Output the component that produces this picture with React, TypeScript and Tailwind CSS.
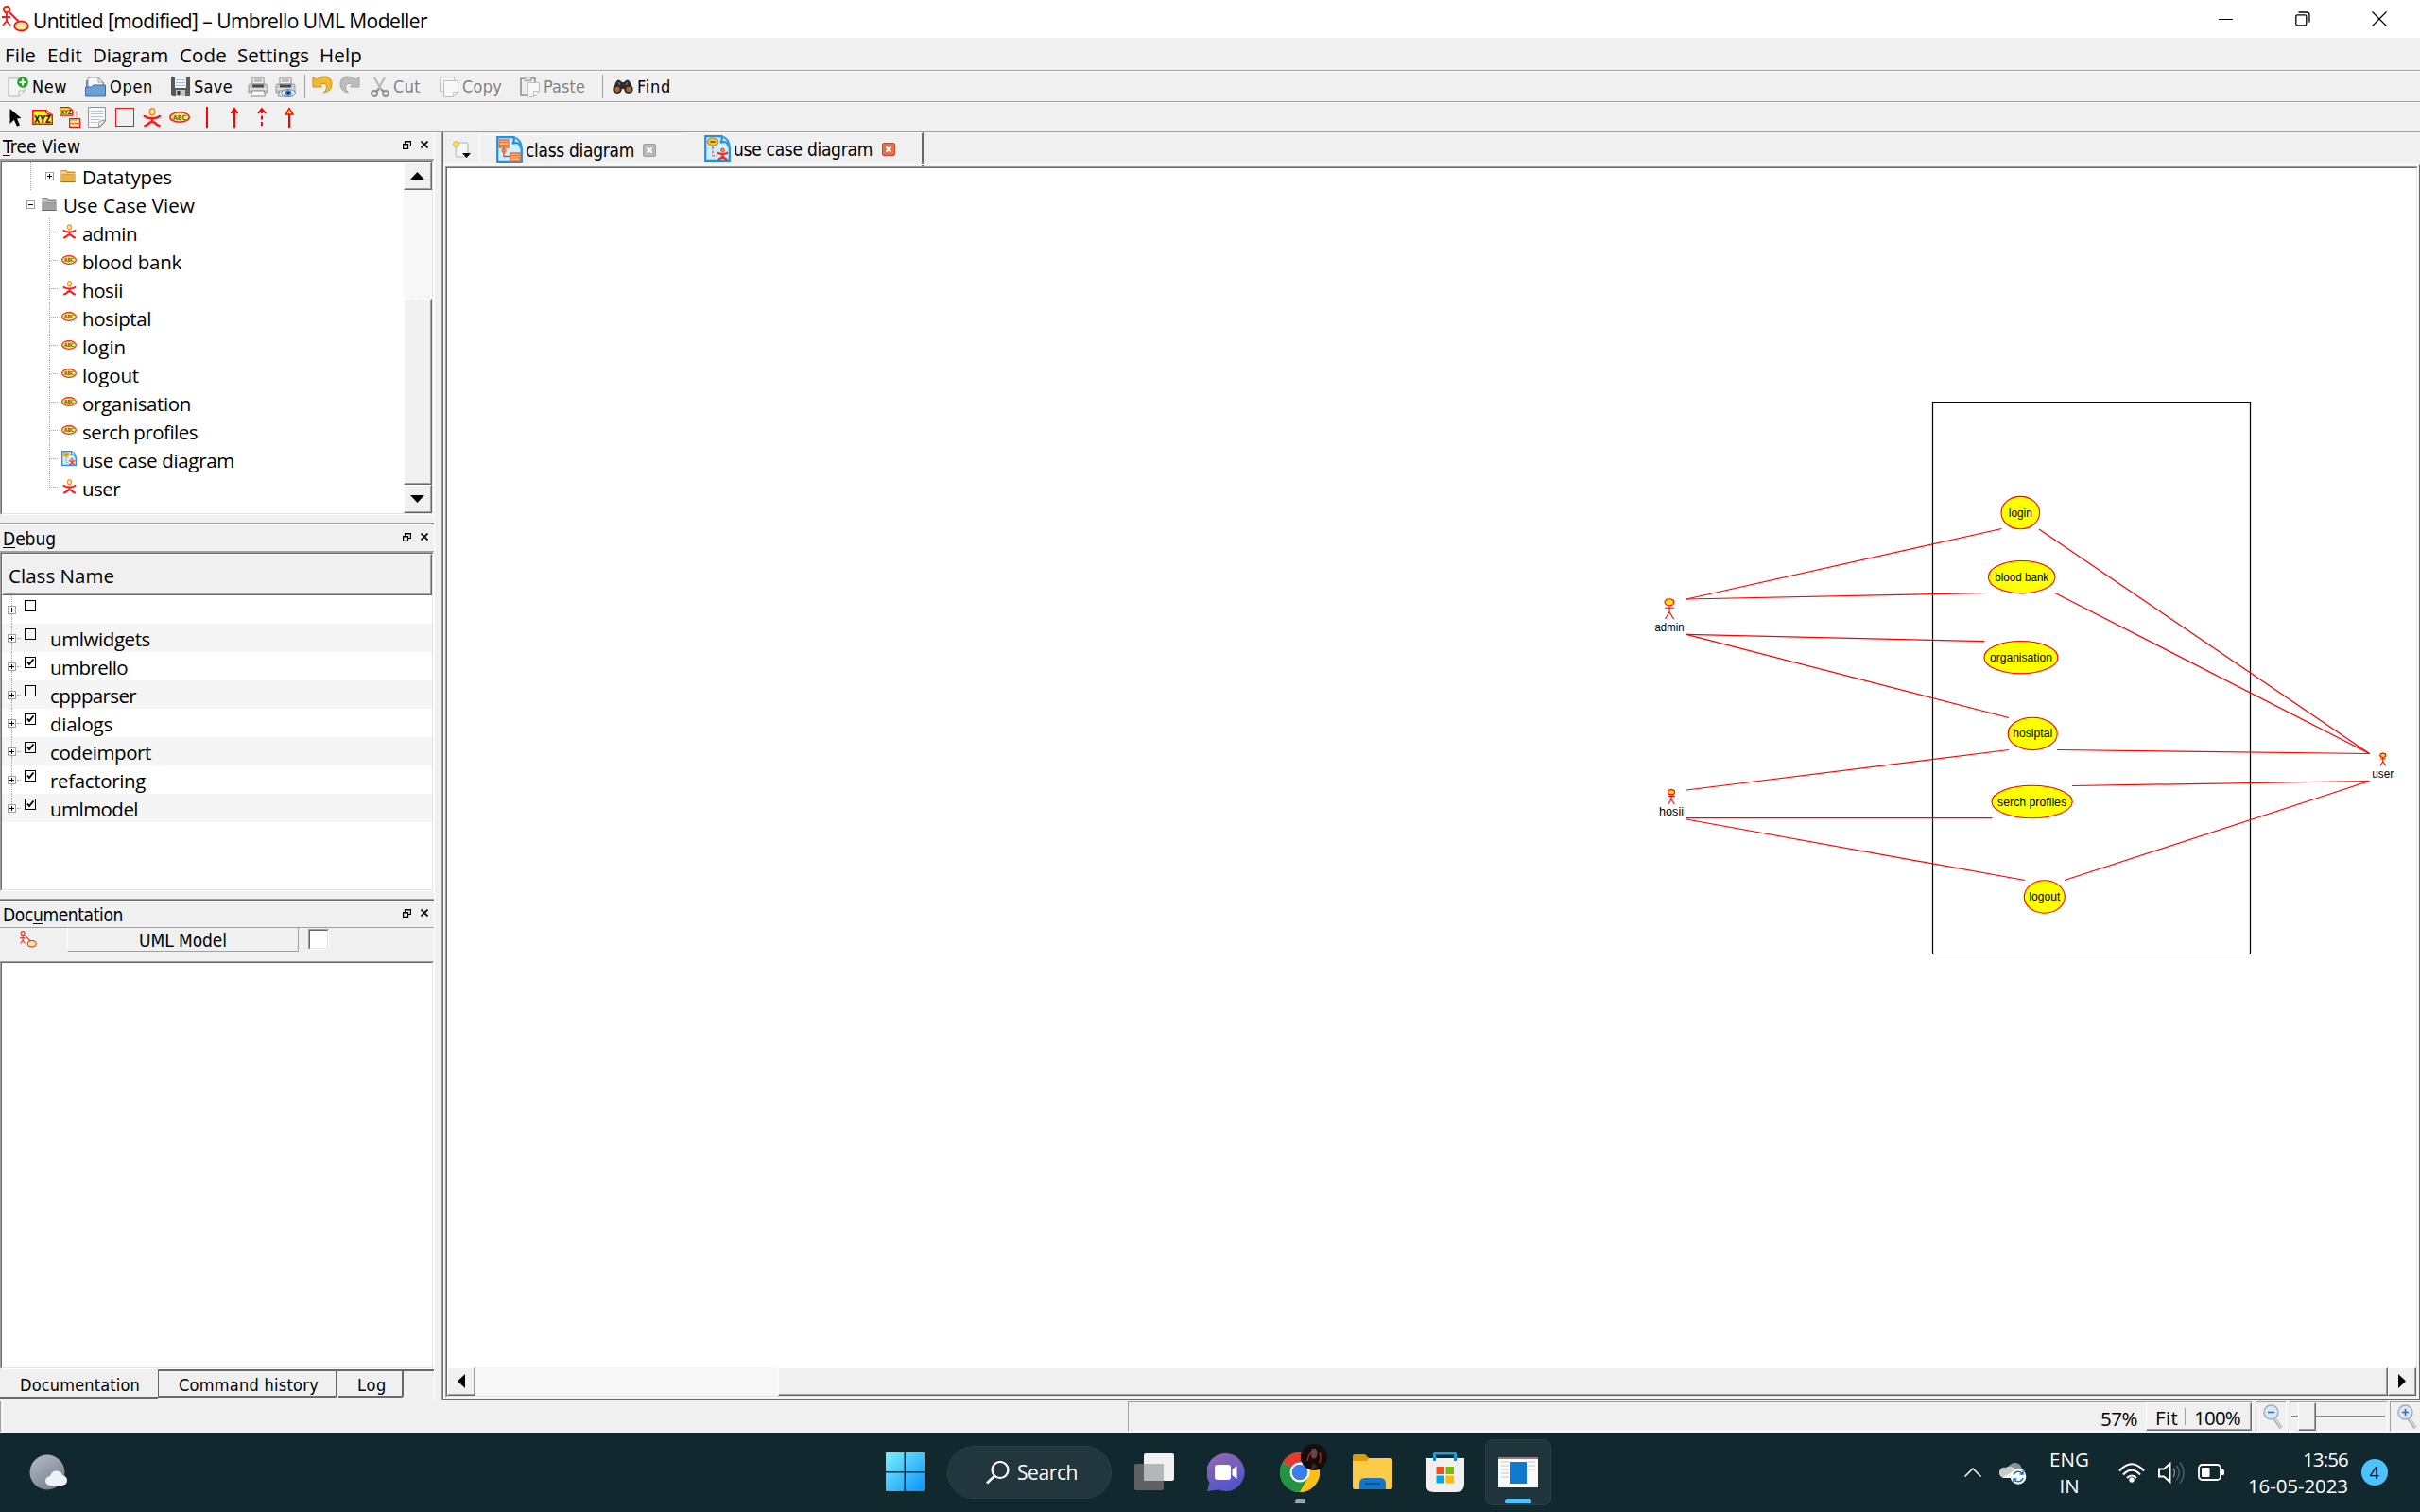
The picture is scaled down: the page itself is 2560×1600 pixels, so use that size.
import { useLayoutEffect, useRef, type ReactNode } from "react";

/* Caption whose tracking is adjusted so that it takes exactly `w` pixels. */
function Label({ w, className = "", children }: { w: number; className?: string; children: ReactNode }) {
  const ref = useRef<HTMLSpanElement>(null);
  useLayoutEffect(() => {
    const el = ref.current;
    if (!el) return;
    el.style.letterSpacing = "0px";
    const n = (el.textContent || "").length;
    const natural = el.getBoundingClientRect().width;
    if (n > 0) el.style.letterSpacing = `${(w - natural) / n}px`;
  }, [w]);
  return (
    <span ref={ref} className={`inline-block shrink-0 whitespace-pre ${className}`}>
      {children}
    </span>
  );
}

const SEGOE = "font-['Open_Sans','Noto_Sans',sans-serif]";
const TAHOMA = "font-['DejaVu_Sans_Condensed','Noto_Sans',sans-serif]";

function Icon({ w, h, vb, className = "", children }: { w: number; h: number; vb?: string; className?: string; children: ReactNode }) {
  return (
    <svg width={w} height={h} viewBox={vb ?? `0 0 ${w} ${h}`} preserveAspectRatio="none" fill="none" className={`block shrink-0 ${className}`}>
      {children}
    </svg>
  );
}

/* ---------- small drawings ---------- */

const Logo = ({ w, h, sw = 1.8 }: { w: number; h: number; sw?: number }) => (
  <Icon w={w} h={h} vb="0 0 29 28">
    <g stroke="#f01818" strokeWidth={sw}>
      <path d="M8 7l12 12M5 8v9M0 12h9M5 16l-4 5M5 16l4 5" />
      <circle cx="5" cy="4" r="3.2" fill="#ffef9e" />
      <ellipse cx="20.500" cy="21.500" rx="7.300" ry="5" fill="#ffe9a0" />
    </g>
  </Icon>
);

const Actor = ({ w, h }: { w: number; h: number }) => (
  <Icon w={w} h={h} vb="0 0 20 21">
    <path d="M1 8.500q4 2.800 9 2.800t9-2.800M10 10.500v5M1.500 19.500q3.500-1 5-3 1.500-1.500 3.500-1.500t3.500 1.500q1.500 2 5 3" stroke="#f91a1a" strokeWidth="2.700" />
    <ellipse cx="10" cy="4.300" rx="2.800" ry="3.600" fill="#ffe97a" stroke="#f5741e" strokeWidth="1.300" />
  </Icon>
);

const UseCase = ({ w, h }: { w: number; h: number }) => (
  <Icon w={w} h={h} vb="0 0 22 12">
    <ellipse cx="11" cy="6" rx="10.200" ry="5.200" fill="#f9e85c" stroke="#f02020" strokeWidth="1.500" />
    <text x="11" y="8.600" textAnchor="middle" fontSize="7" fontWeight="700" fontFamily="DejaVu Sans" fill="#6e6430" textLength="14" lengthAdjust="spacingAndGlyphs">ABC</text>
  </Icon>
);

const Folder = ({ gray }: { gray?: boolean }) => (
  <Icon w={16} h={15}>
    <path d="M0.500 1h6l1 1.500h8V14h-15z" fill={gray ? "#8b8b8b" : "#c9902c"} />
    <path d="M1 2h5l1 2h8v1H1z" fill={gray ? "#bdbdbd" : "#f3cf85"} />
    <path d="M0.500 5.500h15V14h-15z" fill={gray ? "#a2a2a2" : "#e9b44c"} />
    <path d="M0.500 13.500h15" stroke={gray ? "#6a6a6a" : "#a8741c"} />
  </Icon>
);

const PageFrame = ({ children, s }: { children: ReactNode; s: number }) => (
  <Icon w={s} h={s} vb="0 0 28 28">
    <path d="M1.200 1.200H18.500q1 5-1.500 6.500q7-2 8 2.500l1.800 3.300V26.800H1.200z" fill="#cdeefb" stroke="#1e90e6" strokeWidth="2.200" />
    <path d="M18.500 1.200q8 2 8.300 12.300" fill="none" stroke="#2e9bea" strokeWidth="2" />
    {children}
  </Icon>
);

const ClassDiagramIcon = () => (
  <PageFrame s={28}>
    <path d="M3 4h10v8H3zM15 18h10v8H15z" fill="#f8c07a" stroke="#ee6a3a" strokeWidth="1.300" />
    <path d="M3 6.500h10M3 9.500h10M15 20.500h10M15 23h10" stroke="#f0703a" strokeWidth="1.200" />
    <path d="M8 12v9.500h7" stroke="#e8442c" strokeWidth="1.300" />
    <circle cx="8" cy="15.500" r="2" fill="#f7a23c" stroke="#e8442c" />
  </PageFrame>
);

const UseCaseDiagramIcon = ({ s }: { s: number }) => (
  <PageFrame s={s}>
    <ellipse cx="9" cy="7" rx="5.800" ry="4" fill="#f2c62c" stroke="#d98224" strokeWidth="1.200" />
    <path d="M6.500 7h5" stroke="#7d6a1c" strokeWidth="2" />
    <path d="M9 12v10h4" stroke="#ee3a3a" strokeWidth="1.200" strokeDasharray="3 1.500" />
    <path d="M14 18.500q5.500 3 11 0M14.500 26q4-1.500 5-4 1 2.500 5 4M19.500 19v4" stroke="#f52a2a" strokeWidth="2.200" />
    <circle cx="19.500" cy="16" r="1.800" fill="#ff9a3c" stroke="#f52a2a" />
  </PageFrame>
);

const Sep = () => <div className="h-[25px] w-px shrink-0 bg-[#a0a0a0]" />;

const Printer = ({ preview }: { preview?: boolean }) => (
  <Icon w={22} h={22}>
    <path d="M5 1h12v7H5z" fill="#f4f4f4" stroke="#8a8a8a" />
    <path d="M7 3h8M7 5h8" stroke="#888" />
    <path d="M1 9.500q0-1.500 2-1.500h16q2 0 2 1.500V17H1z" fill="#c9c9c9" stroke="#9a9a9a" />
    <path d="M5 8.500h12v3H5z" fill="#4a4a4a" />
    <path d="M2 13h18" stroke="#f2f2f2" />
    <path d="M4.500 15h13l1 6h-15z" fill="#fafafa" stroke="#8a8a8a" />
    {preview && (
      <g>
        <ellipse cx="14" cy="17.500" rx="7.500" ry="4" fill="#dfe9f4" stroke="#6f8aa8" />
        <circle cx="14" cy="17.500" r="3.300" fill="#3b78bd" />
        <circle cx="14" cy="17.500" r="1.400" fill="#0b1c33" />
      </g>
    )}
  </Icon>
);

const Undo = ({ redo }: { redo?: boolean }) => (
  <Icon w={22} h={19} className={redo ? "-scale-x-100" : ""}>
    <path
      d="M1 1.500l3.500 2.500Q9 0.500 14.500 1q6.500 1.200 6.500 8 0 7.500-8.500 9 3.500-3 3-6.500-1-4-5.500-3l-1.500 1 2 2.500H1z"
      fill={redo ? "#bdbdbd" : "#eebb2e"}
      stroke={redo ? "#a4a4a4" : "#c79214"}
    />
  </Icon>
);

const CloseBox = ({ active }: { active?: boolean }) => (
  <Icon w={14} h={14}>
    <rect x="0.500" y="0.500" width="13" height="13" rx="1.500" fill={active ? "#e2714f" : "#b9b9b9"} stroke={active ? "#d1452a" : "#9d9d9d"} />
    <path d="M4.500 4.500l5 5M9.500 4.500l-5 5" stroke="#fff" strokeWidth="2" />
  </Icon>
);

const Magnifier = ({ plus }: { plus?: boolean }) => (
  <Icon w={22} h={28}>
    <path d="M12 15l7 10" stroke="#a9a9a9" strokeWidth="3.600" />
    <path d="M12.500 15l6.500 9.500" stroke="#dedede" strokeWidth="1.400" />
    <circle cx="8.500" cy="8.500" r="7.500" fill="#d9e8f8" stroke="#a3acb8" strokeWidth="1.500" />
    <path d={plus ? "M5 8.500h7M8.500 5v7" : "M5 8.500h7"} stroke="#3a69b0" strokeWidth="1.600" />
  </Icon>
);

/* ---------- window chrome ---------- */

function TitleBar() {
  return (
    <div className="flex h-10 shrink-0 items-center bg-white pl-0.5">
      <Logo w={29} h={28} />
      <Label w={417} className={`ml-[4px] text-[21px] leading-10 ${SEGOE} pt-1`}>Untitled [modified] – Umbrello UML Modeller</Label>
      <div className="ml-auto flex items-center pr-[35px]">
        <Icon w={15} h={15}><path d="M0 7.500h15" stroke="#000" /></Icon>
        <Icon w={16} h={16} className="ml-[66px]">
          <rect x="0.800" y="3.800" width="11" height="11" rx="1.500" stroke="#000" strokeWidth="1.300" />
          <path d="M3.500 1h8.500q3 0 3 3v7.500" stroke="#000" strokeWidth="1.300" />
        </Icon>
        <Icon w={16} h={16} className="ml-[65px]"><path d="M0.500 0.500l15 15M15.500 0.500l-15 15" stroke="#000" strokeWidth="1.200" /></Icon>
      </div>
    </div>
  );
}

function MenuBar() {
  const items: [string, number, number][] = [
    ["File", 33, 5], ["Edit", 37, 12], ["Diagram", 80, 11], ["Code", 50, 12], ["Settings", 76, 11], ["Help", 45, 11],
  ];
  return (
    <div className={`flex h-9 shrink-0 border-b border-white ${SEGOE} text-[20.500px]`}>
      <div className="flex flex-1 border-b border-[#a0a0a0]">
        {items.map(([t, w, m]) => (
          <div key={t} style={{ marginLeft: m }} className="leading-[37px]">
            <Label w={w}>{t}</Label>
          </div>
        ))}
      </div>
    </div>
  );
}

function Tool({ label, w, x, gap, disabled, children }: { label?: string; w: number; x: number; gap?: number; disabled?: boolean; children: ReactNode }) {
  return (
    <div className="flex shrink-0 items-center" style={{ width: x }}>
      {children}
      {label && (
        <div style={{ marginLeft: gap }} className="pt-px leading-8">
          <Label w={w} className={disabled ? "text-[#808080] [text-shadow:1px_1px_0_#fff]" : ""}>{label}</Label>
        </div>
      )}
    </div>
  );
}

function MainToolbar() {
  return (
    <div className="h-[33px] shrink-0 border-b border-white">
      <div className={`flex h-8 items-center border-b border-[#a0a0a0] pl-2 text-[18px] ${TAHOMA}`}>
        <Tool label="New" w={37} x={82} gap={4}>
          <Icon w={22} h={22}>
            <path d="M1 2h17v13l-6 6H1z" fill="#f5f5f5" stroke="#b5b5b5" />
            <path d="M18 15h-6v6z" fill="#fff" stroke="#b5b5b5" />
            <circle cx="16" cy="6" r="5.800" fill="#1ea51e" />
            <path d="M16 2.500v7M12.500 6h7" stroke="#fff" strokeWidth="2.200" />
          </Icon>
        </Tool>
        <Tool label="Open" w={46} x={91} gap={4}>
          <Icon w={22} h={22}>
            <path d="M1 4h5l1 2h13v8H1z" fill="#5b87bd" />
            <path d="M3 1h11l5 5v8H3z" fill="#f6f6f6" stroke="#999" />
            <path d="M14 1v5h5" stroke="#999" />
            <path d="M0.500 11h6l2-2h13v12h-21z" fill="#6d9fd8" stroke="#3f6ca6" />
          </Icon>
        </Tool>
        <Tool label="Save" w={41} x={81} gap={4}>
          <Icon w={20} h={21}>
            <path d="M0 0h20v21H1.500L0 19.500z" fill="#55585c" />
            <path d="M4 1h12v11H4z" fill="#f2f6fa" />
            <path d="M5 3.500h10M5 6.500h10M5 9.500h10" stroke="#a7bdd6" />
            <path d="M5 14h10v7H5z" fill="#c6c6c6" />
            <path d="M6.500 15h3v5h-3z" fill="#333" />
          </Icon>
        </Tool>
        <Tool w={0} x={29}><Printer /></Tool>
        <Tool w={0} x={31}><Printer preview /></Tool>
        <Sep />
        <div className="w-[7px]" />
        <Tool w={0} x={29}><div className="-mt-1"><Undo /></div></Tool>
        <Tool w={0} x={33}><div className="-mt-1"><Undo redo /></div></Tool>
        <Tool label="Cut" w={29} x={73} gap={4} disabled>
          <Icon w={20} h={22}>
            <path d="M4 1l8 14M15 1L7 15" stroke="#b4b4b4" strokeWidth="2" />
            <circle cx="4" cy="18" r="3" stroke="#8f8f8f" strokeWidth="1.800" />
            <circle cx="16" cy="18" r="3" stroke="#8f8f8f" strokeWidth="1.800" />
            <path d="M6 16l3-3M14 16l-3-3" stroke="#8f8f8f" strokeWidth="2" />
          </Icon>
        </Tool>
        <Tool label="Copy" w={42} x={85} gap={4} disabled>
          <Icon w={20} h={22}>
            <path d="M0.500 0.500h15v15h-15z" fill="#f4f4f4" stroke="#c6c6c6" />
            <path d="M4.500 4.500h15v12l-5 5h-10z" fill="#f8f8f8" stroke="#c0c0c0" />
            <path d="M19.500 16.500h-5v5" stroke="#c0c0c0" />
          </Icon>
        </Tool>
        <Tool label="Paste" w={44} x={87} gap={4} disabled>
          <Icon w={21} h={22}>
            <path d="M1 2h15v18H1z" fill="#ececec" stroke="#8f8f8f" strokeWidth="1.600" />
            <path d="M5 0.500h7v4H5z" fill="#d8d8d8" stroke="#a0a0a0" />
            <path d="M8.500 6.500h12v9l-6 6h-6z" fill="#f8f8f8" stroke="#c0c0c0" />
            <path d="M20.500 15.500h-6v6" stroke="#c0c0c0" />
          </Icon>
        </Tool>
        <Sep />
        <div className="w-[10px]" />
        <Tool label="Find" w={36} x={80} gap={4}>
          <Icon w={22} h={17}>
            <path d="M4 3q2-3 5 0l1 1h2l1-1q3-3 5 0l3.500 7q1 5-4 6-5 0-5.500-5h-2q-.5 5-5.500 5-5-1-4-6z" fill="#2c2c2c" />
            <circle cx="5" cy="11.500" r="2.700" fill="#b4622a" />
            <circle cx="17" cy="11.500" r="2.700" fill="#b4622a" />
            <path d="M6 4l2 3M16 4l-2 3" stroke="#999" />
          </Icon>
        </Tool>
      </div>
    </div>
  );
}

function DiagramToolbar() {
  return (
    <div className="h-[31px] shrink-0 border-b border-[#a0a0a0] pl-[10px]">
      <div className="flex h-[30px] items-center">
        <Icon w={24} h={20}><path d="M0.500 1l12 10-4.500.500 3 7-3 1.300-3.200-7L0.500 17z" fill="#000" /></Icon>
        <Icon w={29} h={22}>
          <path d="M0.800 3.800h14l6.500 5v9.500H0.800z" fill="#ffee22" stroke="#f01010" strokeWidth="1.400" />
          <path d="M14.500 3.800q0 4.500 6.500 5" fill="#fffbb0" stroke="#f01010" strokeWidth="1.400" />
          <text x="11" y="17" textAnchor="middle" fontSize="10.500" fontWeight="700" fontFamily="DejaVu Sans" fill="#222" textLength="18" lengthAdjust="spacingAndGlyphs">XYZ</text>
        </Icon>
        <Icon w={30} h={22}>
          <path d="M0.600 0.600h9l4 3v5.500h-13z" fill="#ffee22" stroke="#f01010" strokeWidth="1.200" />
          <text x="7" y="8" textAnchor="middle" fontSize="6.500" fontWeight="700" fontFamily="DejaVu Sans" fill="#333" textLength="11" lengthAdjust="spacingAndGlyphs">XYZ</text>
          <path d="M14 5.500h4v6" stroke="#f01010" strokeDasharray="1.500 1.500" />
          <path d="M10.600 12.600h11v8.800h-11z" fill="#ffe9a0" stroke="#f01010" strokeWidth="1.200" />
          <path d="M10.600 14h11M10.600 17.500h11" stroke="#f46a2a" strokeWidth="1.200" />
        </Icon>
        <Icon w={29} h={22}>
          <path d="M0.500 0.500h18v15l-6 6h-12z" fill="#f7f8f9" stroke="#8d9399" />
          <path d="M2.500 4.500h14M2.500 7.500h14M2.500 10.500h14M2.500 13.500h11M2.500 16.500h8" stroke="#bcc3ca" />
          <path d="M18.500 14l-7 7.500.5-6z" fill="#fff" stroke="#8d9399" />
        </Icon>
        <Icon w={29} h={20}><rect x="0.500" y="0.500" width="19" height="19" stroke="#f01414" /></Icon>
        <Actor w={20} h={21} />
        <div className="ml-2"><UseCase w={22} h={12} /></div>
        <Icon w={110} h={22} className="ml-[17px]">
          <path d="M1 0v22M30 3v19" stroke="#f00" strokeWidth="2" />
          <path d="M26.500 7l3.500-5 3.500 5" stroke="#f00" strokeWidth="2" />
          <path d="M59 3v19" stroke="#f00" strokeWidth="2" strokeDasharray="4 2.500" />
          <path d="M55 7l4-5 4 5" stroke="#f00" strokeWidth="2" />
          <path d="M88 8v14" stroke="#f00" strokeWidth="2" />
          <path d="M84 8l4-6.500 4 6.500z" fill="#ffe23a" stroke="#f00" strokeWidth="1.400" />
        </Icon>
      </div>
    </div>
  );
}

/* ---------- docks ---------- */

function DockTitle({ w, children }: { w: number; children: ReactNode }) {
  return (
    <div className={`flex h-[27px] shrink-0 items-center pl-[3px] pr-[6px] text-[19px] leading-[27px] ${TAHOMA}`}>
      <Label w={w} className="pt-0.5 underline-offset-2">{children}</Label>
      <Icon w={9} h={9} className="ml-auto -mt-[3px]">
        <path d="M2.500 3V0.500h6v5H6M2.500 1h6" stroke="#000" strokeWidth="1.200" />
        <path d="M0.600 3.600h5v4.800h-5zM0.600 4h5" stroke="#000" strokeWidth="1.200" />
      </Icon>
      <Icon w={8} h={8} className="ml-[10px] -mt-[3px]"><path d="M0.500 0.500l7 7M7.500 0.500l-7 7" stroke="#000" strokeWidth="1.700" /></Icon>
    </div>
  );
}

const PlusMinus = ({ minus }: { minus?: boolean }) => (
  <Icon w={9} h={9}>
    <rect x="0.500" y="0.500" width="8" height="8" fill="#fff" stroke="#a0a0a0" />
    <path d={minus ? "M2 4.500h5" : "M2 4.500h5M4.500 2v5"} stroke="#000" />
  </Icon>
);

const RAISED = "border border-t-[#fff] border-l-[#fff] border-r-[#696969] border-b-[#696969] bg-[#f0f0f0] shadow-[inset_-1px_-1px_0_#a0a0a0]";
const SUNKEN = "border border-t-[#a0a0a0] border-l-[#a0a0a0] border-r-white border-b-white";
const SUNKEN_IN = "border border-t-[#696969] border-l-[#696969] border-r-[#e3e3e3] border-b-[#e3e3e3]";
const DITHER = "bg-[repeating-conic-gradient(#fff_0_25%,#f0f0f0_0_50%)] bg-[length:2px_2px]";

type TreeItem = { label: string; w: number; kind: "actor" | "usecase" | "diagram" };
const TREE: TreeItem[] = [
  { label: "admin", w: 58, kind: "actor" },
  { label: "blood bank", w: 105, kind: "usecase" },
  { label: "hosii", w: 43, kind: "actor" },
  { label: "hosiptal", w: 73, kind: "usecase" },
  { label: "login", w: 46, kind: "usecase" },
  { label: "logout", w: 60, kind: "usecase" },
  { label: "organisation", w: 115, kind: "usecase" },
  { label: "serch profiles", w: 122, kind: "usecase" },
  { label: "use case diagram", w: 161, kind: "diagram" },
  { label: "user", w: 40, kind: "actor" },
];

function TreeDock() {
  return (
    <div className="flex h-[413px] shrink-0 flex-col border-t border-white">
      <DockTitle w={82}><span className="underline">T</span>ree View</DockTitle>
      <div className="h-px shrink-0 bg-[#a0a0a0]" />
      <div className={`flex h-[376px] flex-col ${SUNKEN}`}>
        <div className={`flex flex-1 bg-white ${SUNKEN_IN}`}>
          <div className={`flex-1 text-[20.500px] leading-[31px] ${SEGOE}`}>
            <div className="flex h-[30px] items-center">
              <div className="h-full w-[31px] shrink-0 border-r border-dotted border-[#a0a0a0]" />
              <div className="flex w-[31px] items-center pl-[15px]"><PlusMinus /></div>
              <Folder />
              <div className="ml-[7px] pt-0.5"><Label w={95}>Datatypes</Label></div>
            </div>
            <div className="flex h-[30px] items-center">
              <div className="flex w-[42px] items-center pl-[26px]"><PlusMinus minus /></div>
              <Folder gray />
              <div className="ml-[7px] pt-0.5"><Label w={139}>Use Case View</Label></div>
            </div>
            {TREE.map((t, i) => (
              <div key={t.label} className="flex h-[30px] items-center">
                <div className="flex h-full w-[59px] shrink-0 flex-col items-end">
                  <div className="h-[15px] w-[9px] border-b border-l border-dotted border-[#a0a0a0]" />
                  <div className={i < TREE.length - 1 ? "h-[15px] w-[9px] border-l border-dotted border-[#a0a0a0]" : "h-[15px]"} />
                </div>
                <div className="-mt-0.5 ml-[4px] flex w-4 justify-center">
                  {t.kind === "actor" && <Actor w={15} h={16} />}
                  {t.kind === "usecase" && <UseCase w={16} h={10} />}
                  {t.kind === "diagram" && <UseCaseDiagramIcon s={16} />}
                </div>
                <div className="ml-[6px] pt-0.5"><Label w={t.w}>{t.label}</Label></div>
              </div>
            ))}
          </div>
          <div className={`flex w-[30px] flex-col ${DITHER}`}>
            <div className={`flex h-[30px] items-center justify-center pr-px ${RAISED}`}>
              <Icon w={15} h={8}><path d="M0 8l7.500-8L15 8z" fill="#000" /></Icon>
            </div>
            <div className={`mt-[115px] flex-1 ${RAISED}`} />
            <div className={`flex h-[30px] items-center justify-center pr-px ${RAISED}`}>
              <Icon w={15} h={8}><path d="M0 0l7.500 8L15 0z" fill="#000" /></Icon>
            </div>
          </div>
        </div>
      </div>
    </div>
  );
}

const Splitter = () => <div className="h-[2px] shrink-0 border-b border-[#696969] bg-[#a0a0a0]" />;

const CLASSES: [string, number, boolean][] = [
  ["", 0, false], ["umlwidgets", 106, false], ["umbrello", 82, true], ["cppparser", 91, false],
  ["dialogs", 66, true], ["codeimport", 107, true], ["refactoring", 101, true], ["umlmodel", 93, true],
];

function DebugDock() {
  return (
    <div className="flex h-[396px] shrink-0 flex-col border-t border-white">
      <DockTitle w={56}><span className="underline">D</span>ebug</DockTitle>
      <div className="h-px shrink-0 bg-[#a0a0a0]" />
      <div className={`flex h-[359px] flex-col ${SUNKEN}`}>
        <div className={`flex flex-1 flex-col bg-white ${SUNKEN_IN}`}>
          <div className={`h-[44px] shrink-0 pl-[6px] text-[20.500px] leading-[45px] ${SEGOE} ${RAISED}`}><Label w={112}>Class Name</Label></div>
          <div className={`text-[20.500px] ${SEGOE}`}>
            {CLASSES.map(([t, w, on], i) => (
              <div key={i} className={`flex h-[30px] ${i % 2 ? "bg-[#f5f5f5]" : ""}`}>
                <div className="flex w-[24px] shrink-0 flex-col pl-[6px]">
                  <div className="ml-1 h-[11px] border-l border-dotted border-[#a0a0a0]" />
                  <div className="flex items-center"><PlusMinus /><div className="ml-px w-[4px] border-t border-dotted border-[#a0a0a0]" /></div>
                  <div className={i < 7 ? "ml-1 h-[10px] border-l border-dotted border-[#a0a0a0]" : ""} />
                </div>
                <div className="mt-[5px] h-3 w-3 border border-black">
                  {on && <Icon w={10} h={10}><path d="M2 4.500l2 2.500 4.500-5.500" stroke="#000" strokeWidth="1.900" /></Icon>}
                </div>
                {t && <div className="ml-[15px] leading-[32px]"><Label w={w}>{t}</Label></div>}
              </div>
            ))}
          </div>
        </div>
      </div>
    </div>
  );
}

function DocumentationDock() {
  return (
    <div className="flex min-h-0 flex-1 flex-col">
      <div className="shrink-0 border-b border-[#a0a0a0] border-t border-t-white"><DockTitle w={127}>Doc<span className="underline">u</span>mentation</DockTitle></div>
      <div className="flex h-[35px] shrink-0 items-start">
        <div className="mt-[3px] ml-[21px]"><Logo w={18} h={18} sw={1.6} /></div>
        <div className={`ml-[32px] flex h-[25px] w-[245px] justify-center border border-t-0 border-l-white border-r-[#a0a0a0] border-b-[#a0a0a0] text-[19px] leading-[27px] ${TAHOMA}`}>
          <Label w={93}>UML Model</Label>
        </div>
        <div className={`mt-px ml-[10px] h-[22px] w-[22px] bg-white ${SUNKEN}`}><div className={`h-full ${SUNKEN_IN}`} /></div>
      </div>
      <div className={`flex flex-1 flex-col ${SUNKEN}`}><div className={`flex-1 bg-white ${SUNKEN_IN}`} /></div>
      <div className={`flex h-[32px] shrink-0 text-[18px] ${TAHOMA}`}>
        <div className="flex h-[31px] w-[167px] border-b-2 border-[#696969] pl-[21px] leading-[34px]"><Label w={127}>Documentation</Label></div>
        <div className="flex flex-1 items-start border-t-2 border-[#696969]">
          <div className="flex h-[28px] w-[190px] rounded-br-[3px] border-r-2 border-b-2 border-l border-[#696969] pl-[21px] leading-[29px]"><Label w={148}>Command history</Label></div>
          <div className="ml-px flex h-[28px] w-[69px] rounded-br-[3px] border-r-2 border-b-2 border-[#696969] pl-[20px] leading-[29px]"><Label w={31}>Log</Label></div>
        </div>
      </div>
    </div>
  );
}

/* ---------- diagram ---------- */

const USE_CASES: [string, number, number, number, number][] = [
  ["login", 2137.300, 542.600, 20.300, 25],
  ["blood bank", 2138.700, 610.700, 35.300, 57],
  ["organisation", 2137.900, 695.700, 39, 66],
  ["hosiptal", 2150.200, 776.400, 26, 42],
  ["serch profiles", 2149.600, 848.500, 42.600, 73],
  ["logout", 2162.800, 949, 21.500, 33],
];
const LINKS = [
  "M1784 634L2117.500 559.500", "M1784 634L2104 627.500", "M1784 671.300L2099 678.700", "M1784 671.300L2125 759.500",
  "M2157 560L2506.500 797.500", "M2174 627.500L2506.500 797.500", "M2176 793.500L2506.500 797.500", "M2192 831.500L2506.500 826.500",
  "M2184 931.500L2506.500 826.500", "M1784 836L2125 793.500", "M1784 865.500H2107.500", "M1784 867L2142 931.500",
];
const ACTORS: { name: string; x: number; y: number; s: number; ly: number; w: number }[] = [
  { name: "admin", x: 1766, y: 633.500, s: 1, ly: 667.500, w: 31 },
  { name: "hosii", x: 1768, y: 835.500, s: 0.720, ly: 862.500, w: 26 },
  { name: "user", x: 2520.800, y: 797, s: 0.620, ly: 822.500, w: 23 },
];

function Diagram() {
  return (
    <svg width={2083} height={1269} viewBox="473 178 2083 1269" className="block shrink-0" fontFamily="Liberation Sans" fontSize={12} fill="#000" textAnchor="middle">
      <path d="M2044.500 425.500H2380.500V1009.500H2044.500z" fill="none" stroke="#000" strokeWidth="1.200" />
      {LINKS.map((d) => <path key={d} d={d} stroke="#ff0000" strokeWidth="1.250" />)}
      {USE_CASES.map(([t, x, y, rx, w]) => (
        <g key={t}>
          <ellipse cx={x} cy={y} rx={rx} ry={17.200} fill="#ffff00" stroke="#ff0000" strokeWidth="1.100" />
          <text x={x} y={y + 4} textLength={w} lengthAdjust="spacingAndGlyphs">{t}</text>
        </g>
      ))}
      {ACTORS.map((a) => (
        <g key={a.name}>
          <g transform={`translate(${a.x} ${a.y}) scale(${a.s})`} stroke="#ff0000" fill="none" strokeWidth={1.100 / a.s}>
            <path d="M0 7v7M-5 9.700H5M0 14l-4.500 7.500M0 14l4.500 7.500" />
            <ellipse cx="0" cy="3.700" rx="5" ry="3.500" fill="#ffe800" />
          </g>
          <text x={a.x} y={a.ly} textLength={a.w} lengthAdjust="spacingAndGlyphs">{a.name}</text>
        </g>
      ))}
    </svg>
  );
}

function CentralArea() {
  return (
    <div className="flex min-w-0 flex-1 flex-col border-l border-[#a0a0a0]">
      <div className="flex min-h-0 flex-1 flex-col border-l border-b border-[#696969]">
        <div className={`flex h-[34px] shrink-0 pl-[9px] text-[19px] ${TAHOMA}`}>
          <Icon w={29} h={25} className="mt-[8px]">
            <path d="M4.500 5q0-2 2-2h9q1.500 0 1.500 2v11q0 2-2 2h-9q-2 0-2-2z" fill="#f6f6f6" stroke="#b0b0b0" />
            <circle cx="4.500" cy="4.500" r="3" fill="#f5dc5a" stroke="#d9b93c" />
            <path d="M11 14h9l-4.500 5z" fill="#000" />
          </Icon>
          <div className="mt-[2px] flex w-[219px] border-t border-l border-white pl-[17px]">
            <div className="pt-px"><ClassDiagramIcon /></div>
            <Label w={115} className="ml-[3px] leading-[33px]">class diagram</Label>
            <div className="mt-[9px] ml-[9px]"><CloseBox /></div>
          </div>
          <div className="flex h-[36px] w-[251px] border-t border-r-2 border-t-white border-r-[#696969] pl-[19px]">
            <div className="pt-[2px]"><UseCaseDiagramIcon s={28} /></div>
            <Label w={147} className="ml-[3px] leading-[34px]">use case diagram</Label>
            <div className="mt-[10px] ml-[10px]"><CloseBox active /></div>
          </div>
        </div>
        <div className="flex flex-1 flex-col border-t border-l border-r border-t-white border-l-white border-r-[#696969] p-px">
          <div className={`flex flex-1 flex-col ${SUNKEN}`}>
            <div className={`flex flex-1 flex-col bg-white ${SUNKEN_IN}`}>
              <div className="flex flex-1"><Diagram /></div>
              <div className={`flex h-[30px] shrink-0 ${DITHER}`}>
                <div className={`flex w-[30px] items-center justify-center pb-px ${RAISED}`}><Icon w={8} h={15}><path d="M8 0L0 7.500 8 15z" fill="#000" /></Icon></div>
                <div className={`ml-[320px] flex-1 ${RAISED}`} />
                <div className={`flex w-[30px] items-center justify-center pb-px ${RAISED}`}><Icon w={8} h={15}><path d="M0 0l8 7.500L0 15z" fill="#000" /></Icon></div>
              </div>
            </div>
          </div>
        </div>
      </div>
    </div>
  );
}

function StatusBar() {
  return (
    <div className={`flex h-[35px] shrink-0 items-start pt-[2px] text-[20.500px] leading-[35px] ${SEGOE}`}>
      <div className="h-[32px] w-[3px] border-x border-l-[#a0a0a0] border-r-white" />
      <div className={`ml-[1190px] flex h-[32px] w-[1190px] justify-end ${SUNKEN}`}>
        <Label w={39} className="mr-[9px]">57%</Label>
        <div className={`flex h-[30px] w-[112px] items-center pl-[9px] ${RAISED}`}>
          <Label w={24} className="pt-0.5">Fit</Label>
          <div className="ml-[7px] h-[18px] w-px bg-[#a0a0a0]" />
          <Label w={49} className="ml-[9px] pt-0.5">100%</Label>
        </div>
      </div>
      <div className={`ml-[3px] flex h-[32px] w-[33px] pt-0.5 pl-[7px] ${SUNKEN}`}><Magnifier /></div>
      <div className={`ml-[3px] flex h-[32px] w-[104px] items-center pl-px ${SUNKEN}`}>
        <div className="h-[3px] w-[7px] border-t-2 border-b border-t-[#8a8a8a] border-b-white" />
        <div className={`h-[30px] w-[19px] ${RAISED}`} />
        <div className="h-[3px] w-[73px] border-t-2 border-b border-t-[#8a8a8a] border-b-white" />
      </div>
      <div className={`ml-[2px] flex h-[32px] flex-1 overflow-hidden border-r-0 pt-0.5 pl-[7px] ${SUNKEN}`}><Magnifier plus /></div>
    </div>
  );
}

/* ---------- taskbar ---------- */

function Taskbar() {
  return (
    <div className={`flex h-[84px] shrink-0 items-center bg-[#12282f] text-white ${SEGOE}`}>
      <Icon w={42} h={38} className="ml-[31px]">
        <defs>
          <linearGradient id="moon" x1="0" y1="0" x2="0.600" y2="1"><stop stopColor="#b4bcc8" /><stop offset="1" stopColor="#7b838d" /></linearGradient>
        </defs>
        <circle cx="19" cy="19" r="18.500" fill="url(#moon)" />
        <path d="M22 33q-5-1-5-5t5-5q2-6 7-5.500 5 0 6 4.500 5 1 5 5.500t-5 5.500z" fill="#eef1f5" />
      </Icon>
      <Icon w={42} h={42} className="ml-[864px]">
        <defs>
          <linearGradient id="win" x1="0" y1="0" x2="1" y2="1" gradientUnits="objectBoundingBox"><stop stopColor="#7defff" /><stop offset="1" stopColor="#0a93fb" /></linearGradient>
        </defs>
        <path d="M0 1q0-1 1-1h18.500v20H0zM21 0h19q1 0 1 1v19H21zM0 21.500h19.500V41H1q-1 0-1-1zM21 21.500h20V40q0 1-1 1H21z" fill="url(#win)" />
      </Icon>
      <div className="ml-[23px] flex h-14 w-[174px] items-center rounded-full border border-[#2b3f46] bg-[#21363d]">
        <Icon w={25} h={25} className="ml-[40px]">
          <circle cx="15" cy="9.500" r="8.500" stroke="#fff" strokeWidth="2.200" />
          <path d="M9 16l-8 7.500" stroke="#fff" strokeWidth="2.500" />
        </Icon>
        <div className="ml-[8px]"><Label w={64} className="text-[21px] leading-8">Search</Label></div>
      </div>
      <Icon w={43} h={40} className="ml-[24px]">
        <rect x="0" y="11" width="31" height="28" rx="2" fill="#5f6263" />
        <rect x="10" y="0" width="32" height="29" rx="2" fill="#f1f1f1" />
        <path d="M10 11h21v18H12q-2 0-2-2z" fill="#b5b6b7" />
      </Icon>
      <Icon w={41} h={41} className="ml-[34px]">
        <defs><linearGradient id="chat" x1="0" y1="0" x2="0.500" y2="1"><stop stopColor="#9b68b0" /><stop offset="1" stopColor="#5156c8" /></linearGradient></defs>
        <path d="M20 0a20 20 0 1 1-8 38.500L0 40l2.500-9A20 20 0 0 1 20 0z" fill="url(#chat)" />
        <rect x="8" y="12" width="17" height="16" rx="3" fill="#fff" />
        <path d="M26.500 17l5-4v14l-5-4z" fill="#fff" />
      </Icon>
      <div className="relative ml-[36px] h-[70px] w-[50px]">
        <Icon w={42} h={42} vb="0 0 48 48" className="mt-[14px]">
          <circle cx="24" cy="24" r="24" fill="#fbc116" />
          <path d="M24 24L3.200 12A24 24 0 0 1 44.800 12z" fill="#e33b2e" />
          <path d="M3.200 12A24 24 0 0 0 24 48L34.400 30 24 24z" fill="#229342" />
          <path d="M24 12h20.800a24 24 0 0 1-20.800 36L34.400 30z" fill="#fbc116" />
          <circle cx="24" cy="24" r="12" fill="#fff" />
          <circle cx="24" cy="24" r="9.500" fill="#3a7ded" />
        </Icon>
        <Icon w={28} h={28} className="absolute top-[5px] left-[22px]">
          <circle cx="14" cy="14" r="14" fill="#140d0d" />
          <ellipse cx="14" cy="10" rx="3.500" ry="5.500" fill="#6a463e" />
          <path d="M7 18q1-6 4-9M20 9q2 6 0 11" stroke="#a5281c" strokeWidth="1.500" />
          <path d="M11 23q3-5 6 0l-1 4h-4z" fill="#3a2522" />
        </Icon>
        <div className="absolute top-[63px] left-[16px] h-[5px] w-[11px] rounded-full bg-[#9aa3a6]" />
      </div>
      <Icon w={42} h={38} className="ml-[27px]">
        <path d="M0 2q0-2 2-2h11l4 4v6H0z" fill="#df9c06" />
        <path d="M0 7h15l2-3h23q2 0 2 2v29q0 2-2 2H2q-2 0-2-2z" fill="#fdcb45" />
        <path d="M7 37V31q0-6 6-6h16q6 0 6 6v6z" fill="#1376c9" />
        <path d="M13 31h16" stroke="#0b5197" strokeWidth="2" />
      </Icon>
      <Icon w={41} h={42} className="ml-[35px]">
        <path d="M9.500 9V2q0-1 1-1h20q1 0 1 1v7" stroke="#1b9de2" strokeWidth="3" />
        <path d="M0 6h41v27q0 9-9 9H9q-9 0-9-9z" fill="#f0f0f0" />
        <path d="M9.500 6v3M31.500 6v3" stroke="#1280c4" strokeWidth="3" />
        <path d="M11.500 15h8.500v8h-8.500z" fill="#f25022" />
        <path d="M21.500 15h8.500v8h-8.500z" fill="#7fba00" />
        <path d="M11.500 24.500h8.500v8h-8.500z" fill="#00a4ef" />
        <path d="M21.500 24.500h8.500v8h-8.500z" fill="#ffb900" />
      </Icon>
      <div className="ml-[22px] flex h-[70px] w-[70px] flex-col items-center rounded-lg border border-[#2b3f46] bg-[#20343b]">
        <Icon w={42} h={32} className="mt-[18px]">
          <path d="M0 0h42v32H0z" fill="#fafafa" />
          <path d="M0 0h42v2H0z" fill="#8c8180" />
          <path d="M3 5h8M3 9h8M3 13h8M3 17h8M3 21h8M31 5h8M31 9h8M31 13h8" stroke="#c7c7c7" />
          <path d="M12 5h18v23H12z" fill="#1079cf" />
        </Icon>
        <div className="mt-[12px] h-[5px] w-[28px] rounded-full bg-[#4cc2ff]" />
      </div>

      <div className="ml-auto flex items-center">
        <Icon w={18} h={10}><path d="M0.500 9.500L9 1l8.500 8.500" stroke="#fff" strokeWidth="1.500" /></Icon>
        <Icon w={29} h={25} className="ml-[19px]">
          <path d="M8 13Q8 4 15 2q7-1 9 6 4 2 3 8z" fill="#8d9193" />
          <path d="M4 18q-5-2-4-7 2-5 7-4 3-3 8 0 3 3 3 11z" fill="#c8cacb" />
          <path d="M3 18L18 9l2 9z" fill="#f2f2f2" />
          <circle cx="20" cy="16.500" r="8.300" fill="#fff" />
          <path d="M15 15a5.300 5.300 0 0 1 9.500-1.500M25 18a5.300 5.300 0 0 1-9.500 1.500M25 10.500v3.500h-3.500M15 22.500V19h3.500" stroke="#1b6ec2" strokeWidth="1.500" />
        </Icon>
        <div className="ml-[24px] flex w-[42px] flex-col items-center text-[20.500px] leading-[28px]">
          <Label w={42}>ENG</Label>
          <Label w={21}>IN</Label>
        </div>
        <Icon w={28} h={21} className="ml-[31px]">
          <path d="M1 8.500Q14-6 27 8.500M5 12.500q9-9.500 18 0M9 16q5-5 10 0" stroke="#fff" strokeWidth="2.200" />
          <circle cx="14" cy="18" r="2.700" fill="#fff" />
        </Icon>
        <Icon w={28} h={25} className="ml-[14px]">
          <path d="M1 8.500h5L12.500 3v19L6 16.500H1z" stroke="#fff" strokeWidth="2" />
          <path d="M16 8q3 4.500 0 9" stroke="#7c888d" strokeWidth="1.500" />
          <path d="M19.500 5q5.500 7.500 0 15M23 1.500q8 11 0 22" stroke="#4d5e64" strokeWidth="1.500" />
        </Icon>
        <Icon w={28} h={18} className="ml-[14px]">
          <rect x="1" y="1" width="23" height="16" rx="3.500" stroke="#fff" strokeWidth="1.800" />
          <rect x="4" y="4" width="8.500" height="10" rx="1" fill="#fff" />
          <path d="M25 6h1.500q1.500 0 1.500 1.500v3q0 1.500-1.500 1.500H25z" fill="#fff" />
        </Icon>
        <div className="ml-[25px] flex w-[106px] flex-col items-end text-[20.500px] leading-[28px]">
          <Label w={48}>13:56</Label>
          <Label w={106}>16-05-2023</Label>
        </div>
        <div className="mr-[34px] ml-[14px] flex h-7 w-7 items-center justify-center rounded-full bg-[#4cc2ff] text-[18px] leading-7 text-black">4</div>
      </div>
    </div>
  );
}

export default function App() {
  return (
    <div className="flex h-[1600px] w-[2560px] flex-col overflow-hidden bg-[#f0f0f0] text-black">
      <TitleBar />
      <MenuBar />
      <MainToolbar />
      <DiagramToolbar />
      <div className="flex min-h-0 flex-1">
        <div className="flex w-[460px] shrink-0 flex-col border-r border-white">
          <TreeDock />
          <Splitter />
          <DebugDock />
          <Splitter />
          <DocumentationDock />
        </div>
        <div className="w-[7px] shrink-0" />
        <CentralArea />
      </div>
      <StatusBar />
      <Taskbar />
    </div>
  );
}
